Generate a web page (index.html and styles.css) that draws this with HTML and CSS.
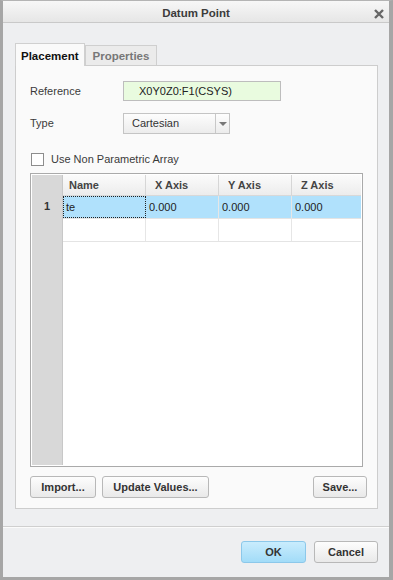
FILE: index.html
```html
<!DOCTYPE html>
<html>
<head>
    <title>Datum Point</title>
    <link rel="stylesheet" href="styles.css">
</head>
<body>
  <div class="window">
    <div class="titlebar">
        <span class="title">Datum Point</span>
        <svg class="close" width="10" height="10" viewBox="0 0 10 10">
            <path d="M1 1 L9 9 M9 1 L1 9" stroke="#666" stroke-width="2.4"/>
        </svg>
    </div>

    <div class="content">
        <div class="tabs">
            <div class="tab active">Placement</div>
            <div class="tab">Properties</div>
        </div>

        <div class="panel">
            <div class="field-row">
                <label class="field-label">Reference</label>
                <div class="ref-field">X0Y0Z0:F1(CSYS)</div>
            </div>

            <div class="field-row">
                <label class="field-label">Type</label>
                <div class="combo">
                    <span class="combo-value">Cartesian</span>
                    <span class="combo-arrow"></span>
                </div>
            </div>

            <div class="check-row">
                <span class="checkbox"></span>
                <span>Use Non Parametric Array</span>
            </div>

            <div class="grid">
                <div class="grid-rowhead">
                    <div class="rh corner"></div>
                    <div class="rh num">1</div>
                </div>
                <div class="grid-body">
                    <div class="grid-row head">
                        <div class="cell c-name">Name</div>
                        <div class="cell c-x">X Axis</div>
                        <div class="cell c-y">Y Axis</div>
                        <div class="cell c-z">Z Axis</div>
                    </div>
                    <div class="grid-row selected">
                        <div class="cell c-name focus">te</div>
                        <div class="cell c-x">0.000</div>
                        <div class="cell c-y">0.000</div>
                        <div class="cell c-z">0.000</div>
                    </div>
                    <div class="grid-row empty">
                        <div class="cell c-name"></div>
                        <div class="cell c-x"></div>
                        <div class="cell c-y"></div>
                        <div class="cell c-z"></div>
                    </div>
                </div>
            </div>

            <div class="btn-row">
                <button class="btn btn-import">Import...</button>
                <button class="btn btn-update">Update Values...</button>
                <span class="spacer"></span>
                <button class="btn btn-save">Save...</button>
            </div>
        </div>
    </div>

    <div class="footer">
        <button class="btn btn-ok">OK</button>
        <button class="btn btn-cancel">Cancel</button>
    </div>
  </div>
</body>
</html>
```

FILE: styles.css
```css
body {
    margin: 0;
    font-family: "Liberation Sans", Arial, sans-serif;
    font-size: 11px;
    color: #333;
}
.window {
    width: 393px;
    height: 580px;
    box-sizing: border-box;
    border-left: 3px solid #a6a6a6;
    border-right: 4px solid #a6a6a6;
    border-bottom: 3px solid #a6a6a6;
    border-top: 1px solid #b4b4b4;
    background-color: #eeeff1;
    display: flex;
    flex-direction: column;
}
.titlebar {
    height: 21px;
    flex: none;
    display: flex;
    align-items: center;
    justify-content: center;
    position: relative;
    background: linear-gradient(#f7f7f7, #e6e6e6);
    border-bottom: 1px solid #c9c9c9;
}
.title {
    font-weight: bold;
    font-size: 11.5px;
    color: #3c3c3c;
    padding-top: 2px;
}
.close {
    position: absolute;
    right: 5px;
    top: 8px;
}
.content {
    padding: 20px 11px 0 12px;
}
.tabs {
    display: flex;
    align-items: flex-end;
    height: 22px;
}
.tab {
    height: 20px;
    box-sizing: border-box;
    padding: 4px 7px 0 7px;
    border: 1px solid #cfcfcf;
    border-bottom: none;
    background-color: #ebebeb;
    color: #777;
    font-weight: bold;
    font-size: 11.5px;
}
.tab.active {
    height: 23px;
    margin-bottom: -1px;
    padding: 6px 5px 0 5px;
    background-color: #fafafa;
    color: #111;
    position: relative;
    z-index: 1;
    border-color: #d0d0d0;
}
.panel {
    height: 444px;
    box-sizing: border-box;
    background-color: #fafafa;
    border: 1px solid #cdcdcd;
    padding: 15px 10px 0 14px;
    display: flex;
    flex-direction: column;
}
.field-row {
    display: flex;
    align-items: center;
    height: 20px;
    margin-bottom: 12px;
}
.field-label {
    width: 93px;
    color: #3a3a3a;
}
.ref-field {
    width: 158px;
    height: 20px;
    box-sizing: border-box;
    border: 1px solid #bdbdbd;
    background-color: #e9fbdf;
    padding: 3px 0 0 15px;
    color: #222;
}
.combo {
    width: 107px;
    height: 21px;
    box-sizing: border-box;
    border: 1px solid #c4c4c4;
    background: linear-gradient(#fdfdfd, #ececec);
    display: flex;
}
.combo-value {
    flex: 1;
    padding: 3px 0 0 8px;
    color: #333;
}
.combo-arrow {
    width: 13px;
    border-left: 1px solid #c8c8c8;
    position: relative;
}
.combo-arrow::after {
    content: "";
    position: absolute;
    left: 3px;
    top: 8px;
    border-left: 4px solid transparent;
    border-right: 4px solid transparent;
    border-top: 4px solid #777;
}
.check-row {
    display: flex;
    align-items: center;
    gap: 7px;
    height: 14px;
    margin: 7px 0 7px 1px;
    color: #3a3a3a;
}
.checkbox {
    width: 13px;
    height: 13px;
    box-sizing: border-box;
    border: 1px solid #8d8d8d;
    background-color: #fff;
}
.grid {
    height: 294px;
    box-sizing: border-box;
    margin-right: 4px;
    border: 1px solid #aaa;
    background-color: #fff;
    display: flex;
    padding: 1px 1px 1px 1px;
}
.grid-rowhead {
    width: 30px;
    background-color: #d8d8d8;
    border-right: 1px solid #c8c8c8;
}
.rh {
    height: 20px;
    box-sizing: border-box;
}
.rh.num {
    height: 22px;
    text-align: center;
    font-weight: bold;
    color: #333;
    padding: 5px 0 0 0;
}
.grid-body {
    flex: 1;
}
.grid-row {
    display: flex;
    height: 22px;
    border-bottom: 1px solid #e4e4e4;
}
.grid-row.head {
    height: 20px;
    background: linear-gradient(#fbfbfb, #ececec);
    border-bottom: 1px solid #d8d8d8;
    font-weight: bold;
    color: #444;
}
.grid-row.selected {
    background-color: #b0e1fc;
    border-bottom: 1px solid #e4e4e4;
    color: #222;
}
.cell {
    box-sizing: border-box;
    border-right: 1px solid #e6e6e6;
    padding: 5px 0 0 3px;
}
.head .cell {
    padding: 4px 0 0 6px;
    border-right: 1px solid #d6d6d6;
}
.head .c-x,
.head .c-y,
.head .c-z {
    padding-left: 9px;
}
.c-name { width: 83px; }
.c-x { width: 73px; }
.c-y { width: 73px; }
.c-z { flex: 1; border-right: none; }
.head .c-z { border-right: none; }
.cell.focus {
    border: 1px dotted #222;
    padding: 4px 0 0 2px;
}
.btn-row {
    display: flex;
    gap: 6px;
    margin-top: 9px;
}
.spacer {
    flex: 1;
}
.btn {
    height: 22px;
    box-sizing: border-box;
    border: 1px solid #b8b8b8;
    border-radius: 3px;
    background: linear-gradient(#fdfdfd, #e9e9e9);
    font-family: "Liberation Sans", Arial, sans-serif;
    font-size: 11px;
    font-weight: bold;
    color: #333;
    padding: 0;
    cursor: pointer;
}
.btn-import { width: 66px; }
.btn-update { width: 107px; }
.btn-save { width: 54px; }
.footer {
    margin-top: 17px;
    border-top: 1px solid #cfcfcf;
    box-shadow: inset 0 1px 0 #fbfbfb;
    display: flex;
    justify-content: flex-end;
    gap: 8px;
    padding: 14px 11px 0 0;
}
.btn-ok {
    width: 65px;
    border-color: #8cc8ea;
    background: linear-gradient(#c9ecfd, #a2dcf8);
}
.btn-cancel {
    width: 64px;
}
```
